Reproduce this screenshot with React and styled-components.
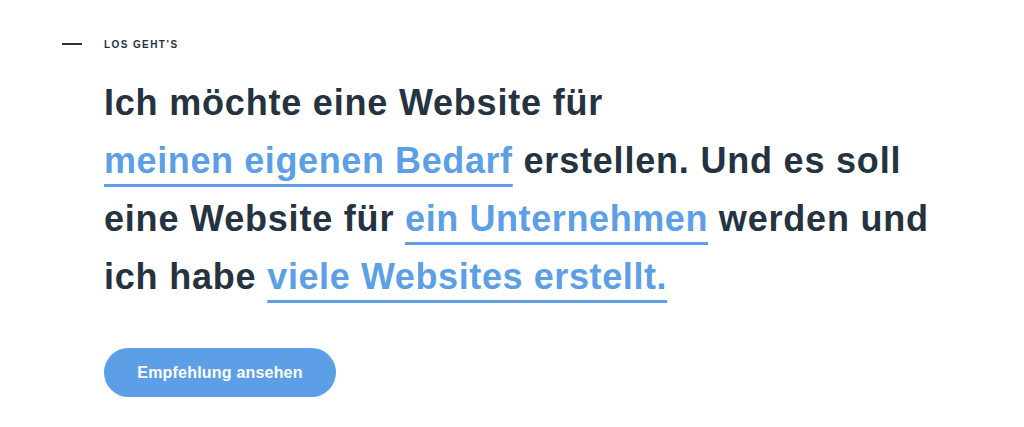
import React from 'react'
import styled, { createGlobalStyle } from 'styled-components'

const GlobalStyle = createGlobalStyle`
	html, body {
		margin: 0;
		padding: 0;
		background: #fff;
	}
	body {
		font-family: "Liberation Sans", Arial, Helvetica, sans-serif;
		-webkit-font-smoothing: antialiased;
	}
`

function App() {
	return (
		<>
			<GlobalStyle />
			<Section>
				<Eyebrow>
					<Dash />
					<EyebrowText>Los geht’s</EyebrowText>
				</Eyebrow>
				<Content>
					<Headline>
						Ich möchte eine Website für{' '}
						<Choice>meinen eigenen Bedarf</Choice> erstellen. Und es soll eine Website für{' '}
						<Choice>ein Unternehmen</Choice> werden und ich habe{' '}
						<Choice>viele Websites erstellt.</Choice>
					</Headline>
					<CtaButton>Empfehlung ansehen</CtaButton>
				</Content>
			</Section>
		</>
	)
}

const Section = styled.section`
	padding: 37px 0 30px 62px;
	box-sizing: border-box;
	width: 1024px;
	height: 427px;
`

const Eyebrow = styled.div`
	display: flex;
	align-items: center;
	gap: 22px;
	height: 14px;
`

const Dash = styled.span`
	display: block;
	width: 20px;
	height: 2px;
	background: #25323f;
`

const EyebrowText = styled.span`
	font-size: 10px;
	font-weight: 700;
	letter-spacing: 1.4px;
	text-transform: uppercase;
	color: #25323f;
`

const Content = styled.div`
	padding-left: 42px;
	margin-top: 23px;
`

const Headline = styled.h1`
	margin: 0;
	max-width: 850px;
	font-size: 36px;
	line-height: 58px;
	font-weight: 700;
	letter-spacing: 0.8px;
	color: #25323f;
`

const Choice = styled.span`
	white-space: nowrap;
	letter-spacing: 0.6px;
	color: #5c9fe6;
	text-decoration: underline;
	text-decoration-color: #5c9fe6;
	text-decoration-thickness: 3px;
	text-underline-offset: 11px;
	text-decoration-skip-ink: none;
`

const CtaButton = styled.button`
	display: flex;
	align-items: center;
	justify-content: center;
	margin-top: 42px;
	width: 232px;
	height: 49px;
	border: none;
	border-radius: 25px;
	background: #5c9fe6;
	color: #fff;
	font-family: inherit;
	font-size: 16px;
	font-weight: 700;
	letter-spacing: 0.2px;
	cursor: pointer;
`

export default App
